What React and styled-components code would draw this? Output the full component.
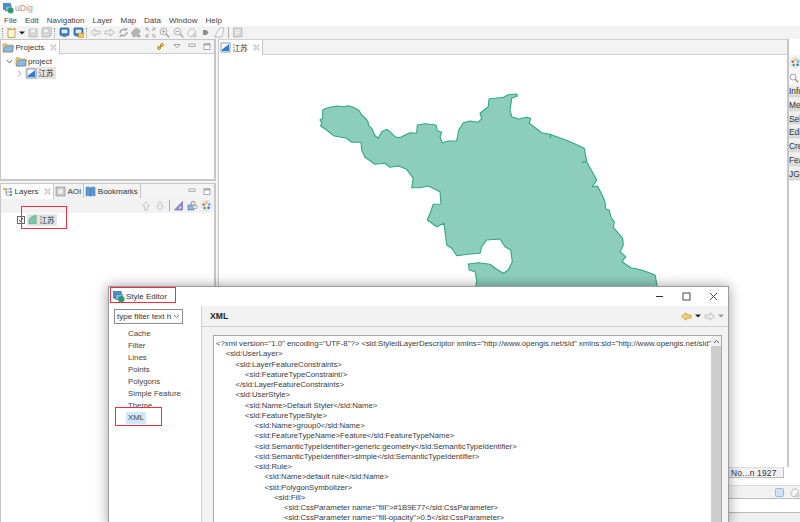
import styled, { createGlobalStyle } from "styled-components";

/* ---------- global ---------- */
const Global = createGlobalStyle`
  html, body { margin: 0; padding: 0; background: #fff; }
  #root { width: 800px; height: 522px; overflow: hidden; }
  * { box-sizing: border-box; }
`;

const CJK = `"Noto Sans CJK SC", "Liberation Sans", sans-serif`;
const UI = `"Liberation Sans", "Noto Sans CJK SC", sans-serif`;

/* ---------- window chrome ---------- */
const Shell = styled.div`
  position: relative;
  width: 800px;
  height: 522px;
  overflow: hidden;
  display: flex;
  flex-direction: column;
  font-family: ${UI};
  font-size: 8px;
  color: #333;
  background: #f4f4f4;
`;
const TitleBar = styled.div`
  height: 14px;
  background: #fff;
  display: flex;
  align-items: center;
  gap: 1px;
  padding: 2px 0 0 3px;
  font-size: 8.6px;
  color: #9a9a9a;
`;
const MenuBar = styled.div`
  height: 12px;
  background: #fff;
  display: flex;
  align-items: center;
  gap: 8px;
  padding: 1px 0 0 4px;
  color: #444;
`;
const ToolBar = styled.div`
  height: 13px;
  background: #f3f3f3;
  display: flex;
  align-items: center;
`;
const Grip = styled.span`
  width: 2px;
  height: 10px;
  margin: 0 ${(p) => (p.$tight ? 1 : 2)}px;
  flex: none;
  border-left: 1px dotted #999;
`;
const ToolSep = styled.span`
  width: 1px;
  height: 11px;
  margin: 0 2px;
  flex: none;
  background: #aaa;
`;
const ToolSlot = styled.span`
  width: ${(p) => p.$w || 13.7}px;
  height: 12px;
  flex: none;
  display: flex;
  align-items: center;
  justify-content: center;
`;

/* ---------- workbench ---------- */
const Workbench = styled.div`
  flex: 1;
  min-height: 0;
  display: flex;
`;
const LeftColumn = styled.div`
  width: 216px;
  flex: none;
  display: flex;
  flex-direction: column;
  gap: 2px;
`;
const View = styled.section`
  height: ${(p) => (p.$h ? `${p.$h}px` : "auto")};
  flex: ${(p) => (p.$h ? "none" : "1")};
  min-height: 0;
  display: flex;
  flex-direction: column;
  background: #fff;
  border: 1px solid #c6c6c6;
  border-width: 1px 2px ${(p) => (p.$h ? "2px" : "0")} 1px;
`;
const TabRow = styled.div`
  height: 14px;
  flex: none;
  display: flex;
  align-items: stretch;
  background: #f3f3f3;
  border-bottom: ${(p) => (p.$flat ? "none" : "1px solid #cfcfcf")};
`;
const Tab = styled.div`
  display: flex;
  align-items: center;
  gap: 1.5px;
  height: ${(p) => (p.$active ? 15 : 14)}px;
  padding: 0 2px 0 1px;
  color: #333;
  background: ${(p) => (p.$active ? "#fff" : "#f3f3f3")};
  border-right: 1px solid #c6c6c6;
  position: relative;
  z-index: 1;
`;
const TabClose = styled.span`
  margin-left: 4px;
  flex: none;
`;
const TabActions = styled.div`
  margin-left: auto;
  display: flex;
  align-items: center;
  gap: 7px;
  padding-right: 3px;
`;
const ViewBar = styled.div`
  height: 15px;
  flex: none;
  display: flex;
  justify-content: flex-end;
  align-items: center;
  padding-right: 1px;
  background: #f2f2f2;
`;
const Tree = styled.div`
  flex: 1;
  padding-top: ${(p) => p.$top || 1}px;
`;
const TreeRow = styled.div`
  height: 12px;
  display: flex;
  align-items: center;
  padding-left: ${(p) => p.$indent}px;
  gap: 1.5px;
`;
const Twist = styled.span`
  width: 8px;
  display: flex;
  justify-content: center;
  flex: none;
`;
const Selected = styled.span`
  display: inline-flex;
  align-items: center;
  gap: 2px;
  height: 12px;
  padding: 0 2px 0 1px;
  background: #e4e4e4;
`;
const Cjk = styled.span`
  font-family: ${CJK};
  font-size: 7.6px;
  line-height: 1;
`;
const Check = styled.span`
  width: 8px;
  height: 8px;
  border: 1px solid #666;
  background: #fff;
  flex: none;
  display: flex;
  align-items: center;
  justify-content: center;
`;

/* ---------- editor / map ---------- */
const MainColumn = styled.div`
  flex: 1;
  min-width: 0;
  display: flex;
  flex-direction: column;
  margin-left: 2px;
`;
const UpperArea = styled.div`
  height: 428px;
  flex: none;
  display: flex;
`;
const Editor = styled.section`
  flex: 1;
  min-width: 0;
  display: flex;
  flex-direction: column;
  background: #fff;
  border-left: 1px solid #c6c6c6;
  border-top: 1px solid #d0d0d0;
`;
const MapCanvas = styled.div`
  flex: 1;
  min-height: 0;
  overflow: hidden;
  background: #fff;
  border-top: 1px solid #cfcfcf;
  svg { display: block; }
`;
const Palette = styled.aside`
  width: 13px;
  flex: none;
  background: #fff;
  border-left: 2px solid #c6c6c6;
  display: flex;
  flex-direction: column;
  overflow: hidden;
  padding-top: 15px;
`;
const PaletteIcon = styled.div`
  height: 17px;
  display: flex;
  align-items: center;
  padding-left: 1px;
  background: #f6f6f6;
`;
const PaletteSearch = styled.div`
  height: 13px;
  display: flex;
  align-items: center;
  background: #fbfbfb;
`;
const PaletteItem = styled.div`
  height: 13.8px;
  padding: 2px 0 0 0;
  white-space: nowrap;
  overflow: hidden;
  color: #333;
  font-size: 8.4px;
  background: linear-gradient(#f4f4f4, #d6d6d6);
  border-bottom: 1px solid #e8e8e8;
`;
const StatusRow = styled.div`
  height: 18px;
  flex: none;
  background: #fff;
  display: flex;
  justify-content: flex-end;
  padding-right: 16px;
  align-items: flex-start;
`;
const StatusBox = styled.div`
  width: 55px;
  height: 11px;
  padding-left: 2px;
  line-height: 10px;
  font-size: 8.4px;
  letter-spacing: 0.2px;
  background: #f1f1f1;
  border-right: 1px solid #bbb;
  border-bottom: 1px solid #bbb;
  border-top: 1px solid #ddd;
`;
const BottomPanel = styled.div`
  flex: 1;
  display: flex;
  flex-direction: column;
  border-top: 1px solid #ddd;
  background: #f0f0f0;
`;
const BottomBar = styled.div`
  height: 13px;
  background: #f2f2f2;
  border-bottom: 1px solid #bbb;
  display: flex;
  justify-content: flex-end;
  align-items: center;
  gap: 4px;
`;
const BottomBody = styled.div`
  height: 14px;
  background: #fff;
  border-bottom: 1px solid #bbb;
`;

/* ---------- style editor dialog ---------- */
const Dialog = styled.div`
  position: absolute;
  left: 108px;
  top: 286px;
  width: 621px;
  height: 240px;
  background: #fff;
  border: 1px solid #9d9d9d;
  box-shadow: 0 0 12px rgba(0, 0, 0, 0.38);
  display: flex;
  flex-direction: column;
  z-index: 5;
`;
const DialogTitle = styled.div`
  height: 19px;
  flex: none;
  display: flex;
  align-items: center;
  gap: 1px;
  padding-left: 4px;
  color: #333;
`;
const WinButtons = styled.div`
  margin-left: auto;
  display: flex;
  align-items: center;
  gap: 18px;
  padding-right: 10px;
`;
const DialogBody = styled.div`
  flex: 1;
  min-height: 0;
  display: flex;
`;
const NavPane = styled.nav`
  width: 92px;
  flex: none;
  padding: 3px 0 0 5px;
  background: #fff;
`;
const FilterCombo = styled.div`
  width: 69px;
  height: 15px;
  display: flex;
  align-items: center;
  justify-content: space-between;
  padding: 0 2px;
  border: 1px solid #8c8c8c;
  color: #333;
  white-space: nowrap;
  overflow: hidden;
  margin-bottom: 4px;
`;
const NavItem = styled.div`
  height: 12px;
  line-height: 12px;
  margin-left: ${(p) => (p.$selected ? 12 : 14)}px;
  padding: 0 ${(p) => (p.$selected ? 2 : 0)}px;
  width: ${(p) => (p.$selected ? "20px" : "auto")};
  font-size: 7.8px;
  color: #444;
  white-space: nowrap;
  background: ${(p) => (p.$selected ? "#cde8ff" : "transparent")};
`;
const PagePane = styled.div`
  flex: 1;
  min-width: 0;
  display: flex;
  flex-direction: column;
  background: #f2f2f2;
  border-left: 1px solid #d0d0d0;
`;
const PageHeader = styled.div`
  height: 21px;
  flex: none;
  display: flex;
  align-items: center;
  justify-content: space-between;
  padding: 0 4px 0 8px;
  border-bottom: 1px solid #cfcfcf;
  font-weight: bold;
  font-size: 8.6px;
  color: #222;
`;
const HeaderNav = styled.div`
  display: flex;
  align-items: center;
  gap: 3px;
`;
const XmlFrame = styled.div`
  flex: 1;
  min-height: 0;
  margin: 8px 6px 0 11px;
  display: flex;
  background: #fff;
  border: 1px solid #a8a8a8;
  border-bottom: none;
`;
const XmlText = styled.div`
  flex: 1;
  min-width: 0;
  padding: 3px 0 0 2px;
  overflow: hidden;
`;
const XmlLine = styled.div`
  height: 10.25px;
  line-height: 10.25px;
  padding-left: ${(p) => p.$level * 9.7}px;
  white-space: nowrap;
  font-size: 7.75px;
  color: #3a3a3a;
`;
const Scrollbar = styled.div`
  width: 10px;
  flex: none;
  background: #f0f0f0;
  display: flex;
  flex-direction: column;
`;
const ScrollArrow = styled.div`
  height: 10px;
  display: flex;
  align-items: center;
  justify-content: center;
`;
const ScrollThumb = styled.div`
  flex: 1;
  background: #cdcdcd;
`;

/* red annotation boxes the screenshot's author drew over the window */
const Marker = styled.div`
  position: absolute;
  left: ${(p) => p.$x}px;
  top: ${(p) => p.$y}px;
  width: ${(p) => p.$w}px;
  height: ${(p) => p.$h}px;
  border: 1.5px solid #e8323f;
  z-index: 8;
  pointer-events: none;
`;

/* ---------- icons ---------- */
const S = ({ w = 11, h = 11, box = "0 0 11 11", children }) => (
  <svg width={w} height={h} viewBox={box} style={{ display: "block", flex: "none" }}>
    {children}
  </svg>
);

const UdigLogo = ({ size = 11 }) => (
  <S w={size} h={size}>
    <rect x="0.5" y="0.5" width="7" height="6" fill="#4c8fc9" stroke="#2d6a9f" strokeWidth="0.6" />
    <rect x="2.5" y="3" width="6" height="5" fill="#7db6e0" stroke="#2d6a9f" strokeWidth="0.5" />
    <circle cx="7.6" cy="7.6" r="3" fill="#36a05a" />
    <circle cx="7" cy="7" r="1.2" fill="#2f7fc0" />
  </S>
);
const NewDoc = () => (
  <S>
    <path d="M2 2.5h7v8H2z" fill="#fff6d8" stroke="#b99a3c" strokeWidth="0.8" />
    <path d="M1 1.5h3M5 .5v2M7 1.5h3" stroke="#d9a520" strokeWidth="0.8" />
  </S>
);
const Caret = ({ color = "#222" }) => (
  <S w={6} h={4} box="0 0 6 4">
    <path d="M0 .5h6L3 3.6z" fill={color} />
  </S>
);
const Save = ({ double }) => (
  <S>
    {double && <rect x="2.5" y="0.5" width="8" height="8" fill="#e4e4e4" stroke="#bdbdbd" strokeWidth="0.7" />}
    <rect x="1" y="2" width="8" height="8" fill="#d8d8d8" stroke="#b3b3b3" strokeWidth="0.7" />
    <rect x="3" y="2.5" width="4" height="2.5" fill="#f2f2f2" />
  </S>
);
const Monitor = ({ overlay }) => (
  <S>
    <rect x="1" y="1" width="9" height="7.5" rx="1" fill="#3f7fbf" stroke="#245a92" strokeWidth="0.7" />
    <rect x="2.6" y="2.6" width="5.8" height="3.6" fill="#dcecf9" />
    <rect x="3.5" y="8.7" width="4" height="1.3" fill="#6a8fb0" />
    {overlay && <path d="M5.5 6h5v4.5h-5z" fill="#f3c25b" stroke="#b8862a" strokeWidth="0.5" />}
  </S>
);
const GreyArrow = ({ dir = 1, stroke = "#b9b9b9", fill = "#efefef", w = 11 }) => (
  <S w={w} h={9} box="0 0 11 9">
    <g transform={dir < 0 ? "translate(11 0) scale(-1 1)" : undefined}>
      <path d="M1 3h5V.8L10.3 4.5 6 8.2V6H1z" fill={fill} stroke={stroke} strokeWidth="0.9" />
    </g>
  </S>
);
const UpArrow = ({ flip }) => (
  <S w={8} h={10} box="0 0 8 10">
    <g transform={flip ? "translate(0 10) scale(1 -1)" : undefined}>
      <path d="M4 .8 7.4 5H5.4v4H2.6V5H.6z" fill="#f3f3f3" stroke="#bdbdbd" strokeWidth="0.8" />
    </g>
  </S>
);
const Refresh = () => (
  <S>
    <path d="M2 6a3.5 3.5 0 0 1 6-2.5M9 5a3.5 3.5 0 0 1-6 2.5" fill="none" stroke="#a9a9a9" strokeWidth="1.6" />
    <path d="M7 1.5 9.5 1 9 4zM4 9.5 1.5 10 2 7z" fill="#a9a9a9" />
  </S>
);
const Puzzle = () => (
  <S>
    <path d="M2 3h2V1.5h3V3h2v2.5H7.5V8H9v2H6V8.5H4V10H2V7.5H.8V5H2z" fill="#b5b5b5" stroke="#979797" strokeWidth="0.5" />
  </S>
);
const ZoomExtent = () => (
  <S>
    <path d="M1 1l3 3M10 1 7 4M1 10l3-3M10 10 7 7" stroke="#b3b3b3" strokeWidth="1.2" />
    <path d="M1 3.4V1h2.4M7.6 1H10v2.4M1 7.6V10h2.4M10 7.6V10H7.6" fill="none" stroke="#b3b3b3" strokeWidth="0.9" />
  </S>
);
const Lens = ({ sign }) => (
  <S>
    <circle cx="4.5" cy="4.5" r="3.4" fill="#f2f2f2" stroke="#adadad" strokeWidth="0.9" />
    <path d="M7 7l3.2 3.2" stroke="#a0a0a0" strokeWidth="1.4" />
    <path d={sign === "+" ? "M2.8 4.5h3.4M4.5 2.8v3.4" : "M2.8 4.5h3.4"} stroke="#9a9a9a" strokeWidth="0.8" />
  </S>
);
const PickTool = () => (
  <S>
    <path d="M4 2h3.5l2 2v2L6 9.5H3.8L1.5 7z" fill="#f4f4f4" stroke="#b2b2b2" strokeWidth="0.8" />
    <path d="M7 7h3v3H7z" fill="#dcdcdc" stroke="#b2b2b2" strokeWidth="0.5" />
  </S>
);
const Dot = () => (
  <S>
    <path d="M3 3h3.4L8.5 5.5 6.4 8H3z" fill="#8c8c8c" />
  </S>
);
const Eraser = () => (
  <S w={12}>
    <path d="M1 10 6 1h4.5L8.5 10z" fill="#f6f6f6" stroke="#b1b1b1" strokeWidth="0.8" />
  </S>
);
const Preview = () => (
  <S>
    <rect x="1.5" y="1" width="8.5" height="9" fill="#d7d7d7" stroke="#b2b2b2" strokeWidth="0.7" />
    <path d="M3 3.5h5M3 5.5h5M3 7.5h3.4" stroke="#f5f5f5" strokeWidth="0.9" />
  </S>
);
const Folder = () => (
  <S w={12} h={11} box="0 0 12 11">
    <path d="M1 3V1.8h3.6L5.6 3H11v7H1z" fill="#f2cf7a" stroke="#a88a3a" strokeWidth="0.6" />
    <path d="M3 4h8.5L10 10H1.4z" fill="#8cb6e3" stroke="#50749e" strokeWidth="0.5" />
  </S>
);
const MapDoc = () => (
  <S>
    <rect x="1" y="1" width="9" height="9" fill="#fff" stroke="#71839a" strokeWidth="0.8" />
    <path d="M2 9V7.5L8.5 2.4H9V9z" fill="#2f7fd0" />
  </S>
);
const LayerShape = () => (
  <S w={10}>
    <path d="M1 10V7C1.5 3.5 4.5 1.3 9 1v9z" fill="#78c8a8" stroke="#4d9f80" strokeWidth="0.6" />
  </S>
);
const Chevron = ({ open }) => (
  <S w={7} h={7} box="0 0 7 7">
    <path d={open ? "M1 2l2.5 3L6 2" : "M2 .8 5 3.5 2 6.2"} fill="none" stroke={open ? "#555" : "#999"} strokeWidth="0.9" />
  </S>
);
const Pin = () => (
  <S>
    <path d="M2 7l2-2 2 2-2 2zM5 4l2-2 2 2-2 2z" fill="#f0c040" stroke="#a77c17" strokeWidth="0.7" />
    <path d="M4.5 6.5l2-2" stroke="#a77c17" strokeWidth="1" />
  </S>
);
const CloseGlyph = () => (
  <S w={7} h={7} box="0 0 7 7">
    <path d="M1 .6 3.500 2.600 6 .6 6.400 1 4.400 3.500 6.400 6 6 6.400 3.500 4.400 1 6.400 .6 6 2.600 3.500 .6 1z" fill="#fff" stroke="#9a9a9a" strokeWidth="0.6" />
  </S>
);
const MiniButton = ({ kind }) => (
  <S w={8} h={7} box="0 0 8 7">
    {kind === "menu" && <path d="M1 1.5h6L4 4.6z" fill="#fff" stroke="#777" strokeWidth="0.7" />}
    {kind === "min" && <rect x="1" y="1" width="6" height="2.4" fill="#fff" stroke="#888" strokeWidth="0.7" />}
    {kind === "max" && (
      <>
        <rect x="1" y="0.8" width="6" height="5.6" fill="#fff" stroke="#888" strokeWidth="0.7" />
        <path d="M1 1.8h6" stroke="#888" strokeWidth="1" />
      </>
    )}
  </S>
);
const LayersGlyph = () => (
  <S>
    <circle cx="2.5" cy="3" r="1.6" fill="#e6b64a" />
    <path d="M4 3h3M4 3v6h4M4 6h4" fill="none" stroke="#7a8a9a" strokeWidth="0.8" />
    <rect x="7.5" y="2" width="2" height="2" fill="#5e93c8" />
    <rect x="8" y="5" width="2" height="2" fill="#5e93c8" />
    <rect x="8" y="8" width="2" height="2" fill="#5e93c8" />
  </S>
);
const AoiGlyph = () => (
  <S>
    <rect x="1" y="1" width="9" height="9" fill="#c8c8c8" stroke="#8a8a8a" strokeWidth="0.6" />
    <rect x="3.2" y="3.2" width="4.6" height="4.6" fill="#f0f0f0" />
  </S>
);
const BookGlyph = () => (
  <S>
    <path d="M1 1.5c1.5-.6 3-.6 4.3.2v8.5C4 9.400 2.500 9.400 1 10zM10 1.500c-1.500-.6-3-.6-4.300.2v8.500c1.300-.8 2.800-.8 4.300-.2z" fill="#5d9ad8" stroke="#2f6aa6" strokeWidth="0.5" />
  </S>
);
const Wedge = () => (
  <S>
    <path d="M1.500 10 9.500 1.500V10z" fill="#8f8bc4" stroke="#6862a8" strokeWidth="0.6" />
    <path d="M5.500 8.500h2.600V6z" fill="#f1f1f8" />
  </S>
);
const StyleGlyph = () => (
  <S>
    <rect x="1" y="5" width="6" height="5" fill="#8db8e0" stroke="#41709e" strokeWidth="0.6" />
    <path d="M4 5V3.500a2 2 0 0 1 4 0V5" fill="none" stroke="#777" strokeWidth="0.8" />
    <rect x="6" y="5.500" width="4" height="3" fill="#e8e8e8" stroke="#888" strokeWidth="0.5" />
  </S>
);
const ColorWheel = () => (
  <S>
    <circle cx="5.500" cy="5.500" r="5" fill="#eceef6" stroke="#c4c8d8" strokeWidth="0.5" />
    <circle cx="5.500" cy="2.800" r="1.200" fill="#f2b32a" />
    <circle cx="8.200" cy="4.500" r="1.200" fill="#5da9e0" />
    <circle cx="7.500" cy="7.800" r="1.200" fill="#3f63c0" />
    <circle cx="3.700" cy="8" r="1.200" fill="#3aa655" />
    <circle cx="2.800" cy="4.600" r="1.200" fill="#de3b3b" />
  </S>
);
const SearchGlyph = () => (
  <S w={10} h={10} box="0 0 11 11">
    <circle cx="4.500" cy="4.500" r="3.300" fill="#fff" stroke="#8f8f8f" strokeWidth="0.9" />
    <path d="M7 7l3.300 3.300" stroke="#a07a5a" strokeWidth="1.400" />
  </S>
);
const BlueSquare = () => (
  <S>
    <rect x="1.500" y="1.500" width="8" height="8" rx="1" fill="#cfe3f6" stroke="#8db4dc" strokeWidth="0.9" />
  </S>
);

/* ---------- content ---------- */
const menus = ["File", "Edit", "Navigation", "Layer", "Map", "Data", "Window", "Help"];
const palette = ["Info", "Measure", "Selection", "Edit", "Create", "Feature", "JGrass"];
const pages = ["Cache", "Filter", "Lines", "Points", "Polygons", "Simple Feature", "Theme"];
const xml = [
  [0, `<?xml version="1.0" encoding="UTF-8"?> <sld:StyledLayerDescriptor xmlns="http://www.opengis.net/sld" xmlns:sld="http://www.opengis.net/sld" xmlns:ogc`],
  [1, "<sld:UserLayer>"],
  [2, "<sld:LayerFeatureConstraints>"],
  [3, "<sld:FeatureTypeConstraint/>"],
  [2, "</sld:LayerFeatureConstraints>"],
  [2, "<sld:UserStyle>"],
  [3, "<sld:Name>Default Styler</sld:Name>"],
  [3, "<sld:FeatureTypeStyle>"],
  [4, "<sld:Name>group0</sld:Name>"],
  [4, "<sld:FeatureTypeName>Feature</sld:FeatureTypeName>"],
  [4, "<sld:SemanticTypeIdentifier>generic:geometry</sld:SemanticTypeIdentifier>"],
  [4, "<sld:SemanticTypeIdentifier>simple</sld:SemanticTypeIdentifier>"],
  [4, "<sld:Rule>"],
  [5, "<sld:Name>default rule</sld:Name>"],
  [5, "<sld:PolygonSymbolizer>"],
  [6, "<sld:Fill>"],
  [7, `<sld:CssParameter name="fill">#1B9E77</sld:CssParameter>`],
  [7, `<sld:CssParameter name="fill-opacity">0.5</sld:CssParameter>`],
];

// outline of the province, in window coordinates
const outline = `322.7,110 326.7,108 336.7,106 345,106.7 348.3,105.7 353.3,107.3 359.3,110.7 361.7,115 367.7,120.7
368.7,125.7 371.7,128.3 375,135.7 378.3,138.3 381.7,131.7 386.7,129.3 390,131.7 395,136.7 400,137.7 405,135 410,132.7
416.7,133.3 417.3,125 425,123.7 436,125 437.3,130.7 441.7,132.3 440,136.7 442.3,142.7 448.3,141 456.7,140.7 458.7,130
463.3,122.7 470,121 478.3,122.3 481.7,118.3 480,113.3 488.3,106.7 489,99 503.3,97.3 508.3,94.7 516.7,94 517.3,96
511.7,98.3 510,110 511.7,116.7 518.3,119 526.7,117.3 530.7,118.3 529.3,123.3 541.7,132.7 550,134.3 568.3,141 584.3,148.3
586.7,161.7 596.7,180 592.3,186.7 597.3,186 601.7,194 605,201.7 605.7,209 609.3,210 610.7,216.7 614.3,221.7 613.3,227.3
622.7,238.3 623.3,245 620,251.7 625.7,256.7 622,261.700 631,267.7 641.7,270 655,275 656.7,283.3 658,300 474.3,300
476.7,280 475,271.7 469.3,270 468.3,264 478.3,262.7 490,264.3 496.7,269.3 503.3,273.3 508.3,270 512.3,261.7 510.7,250
505,246.7 500,239 486.7,240 481.7,246.7 480,253.3 470,254 456.7,255.7 451.7,248.3 446.7,245 444,223.3 436.7,226.7
427.3,220 430.7,211.7 433.3,204.3 441,204 440,191.7 428.3,186 420,187.7 411.7,187.7 413.3,178.3 406.7,169.3 398.3,166
390,167.3 385,163.3 375,164.3 365,157.3 361.7,150 361,142.3 351.7,142.3 346.7,138.3 333.3,135.7 326.7,130 320.7,126
321.7,122.3 320,120 322.7,118.3`;

export default function App() {
  return (
    <Shell>
      <Global />
      <TitleBar>
        <UdigLogo />
        uDig
      </TitleBar>
      <MenuBar>
        {menus.map((m) => (
          <span key={m}>{m}</span>
        ))}
      </MenuBar>
      <ToolBar>
        <Grip />
        <ToolSlot $w={11}><NewDoc /></ToolSlot>
        <ToolSlot $w={10}><Caret /></ToolSlot>
        <ToolSlot><Save /></ToolSlot>
        <ToolSlot $w={11}><Save double /></ToolSlot>
        <Grip />
        <ToolSlot><Monitor /></ToolSlot>
        <ToolSlot><Monitor overlay /></ToolSlot>
        <Grip $tight />
        <ToolSlot><GreyArrow dir={-1} /></ToolSlot>
        <ToolSlot><GreyArrow /></ToolSlot>
        <ToolSlot><Refresh /></ToolSlot>
        <ToolSlot><Puzzle /></ToolSlot>
        <ToolSlot><ZoomExtent /></ToolSlot>
        <ToolSlot><Lens sign="+" /></ToolSlot>
        <ToolSlot><Lens sign="-" /></ToolSlot>
        <ToolSlot><PickTool /></ToolSlot>
        <ToolSlot><Dot /></ToolSlot>
        <ToolSlot><Eraser /></ToolSlot>
        <ToolSep />
        <ToolSlot><Preview /></ToolSlot>
      </ToolBar>

      <Workbench>
        <LeftColumn>
          <View $h={142}>
            <TabRow>
              <Tab $active>
                <Folder />
                Projects
                <TabClose><CloseGlyph /></TabClose>
              </Tab>
              <TabActions>
                <Pin />
                <MiniButton kind="menu" />
                <MiniButton kind="min" />
                <MiniButton kind="max" />
              </TabActions>
            </TabRow>
            <Tree>
              <TreeRow $indent={4}>
                <Twist><Chevron open /></Twist>
                <Folder />
                project
              </TreeRow>
              <TreeRow $indent={14}>
                <Twist><Chevron /></Twist>
                <Selected>
                  <MapDoc />
                  <Cjk>江苏</Cjk>
                </Selected>
              </TreeRow>
            </Tree>
          </View>
          <View>
            <TabRow $flat>
              <Tab $active>
                <LayersGlyph />
                Layers
                <TabClose><CloseGlyph /></TabClose>
              </Tab>
              <Tab>
                <AoiGlyph />
                AOI
              </Tab>
              <Tab>
                <BookGlyph />
                Bookmarks
              </Tab>
              <TabActions>
                <MiniButton kind="min" />
                <MiniButton kind="max" />
              </TabActions>
            </TabRow>
            <ViewBar>
              <ToolSlot><UpArrow /></ToolSlot>
              <ToolSlot><UpArrow flip /></ToolSlot>
              <ToolSep />
              <ToolSlot><Wedge /></ToolSlot>
              <ToolSlot><StyleGlyph /></ToolSlot>
              <ToolSlot><ColorWheel /></ToolSlot>
            </ViewBar>
            <Tree $top={0.5}>
              <TreeRow $indent={16}>
                <Check>
                  <S w={6} h={6} box="0 0 6 6">
                    <path d="M1 3l1.500 1.500L5 1" fill="none" stroke="#333" strokeWidth="0.9" />
                  </S>
                </Check>
                <Selected>
                  <LayerShape />
                  <Cjk>江苏</Cjk>
                </Selected>
              </TreeRow>
            </Tree>
          </View>
        </LeftColumn>

        <MainColumn>
          <UpperArea>
            <Editor>
              <TabRow $flat>
                <Tab $active>
                  <MapDoc />
                  <Cjk>江苏</Cjk>
                  <TabClose><CloseGlyph /></TabClose>
                </Tab>
              </TabRow>
              <MapCanvas>
                <svg width="567" height="412" viewBox="219 55 567 412">
                  <polygon points={outline} fill="#8dcebb" stroke="#2fa782" strokeWidth="1.1" strokeLinejoin="round" />
                  <path d="M550.500 134v4M582 162.500l4.700-1" stroke="#1f9e77" strokeWidth="1" />
                </svg>
              </MapCanvas>
            </Editor>
            <Palette>
              <PaletteIcon><ColorWheel /></PaletteIcon>
              <PaletteSearch><SearchGlyph /></PaletteSearch>
              {palette.map((p) => (
                <PaletteItem key={p}>{p}</PaletteItem>
              ))}
            </Palette>
          </UpperArea>
          <StatusRow>
            <StatusBox>No...n 1927</StatusBox>
          </StatusRow>
          <BottomPanel>
            <BottomBar>
              <BlueSquare />
              <PickTool />
            </BottomBar>
            <BottomBody />
          </BottomPanel>
        </MainColumn>
      </Workbench>

      <Dialog>
        <DialogTitle>
          <UdigLogo size={12} />
          Style Editor
          <WinButtons>
            <S w={9} h={9} box="0 0 9 9"><path d="M1 4.500h7" stroke="#333" strokeWidth="1" /></S>
            <S w={9} h={9} box="0 0 9 9"><rect x="1" y="1" width="7" height="7" fill="none" stroke="#333" strokeWidth="0.9" /></S>
            <S w={9} h={9} box="0 0 9 9"><path d="M1 1l7 7M8 1 1 8" stroke="#333" strokeWidth="0.9" /></S>
          </WinButtons>
        </DialogTitle>
        <DialogBody>
          <NavPane>
            <FilterCombo>
              type filter text h
              <S w={7} h={5} box="0 0 7 5"><path d="M1 1l2.500 2.500L6 1" fill="none" stroke="#555" strokeWidth="0.8" /></S>
            </FilterCombo>
            {pages.map((p) => (
              <NavItem key={p}>{p}</NavItem>
            ))}
            <NavItem $selected>XML</NavItem>
          </NavPane>
          <PagePane>
            <PageHeader>
              XML
              <HeaderNav>
                <GreyArrow dir={-1} stroke="#cf9a2c" fill="#f8dc8c" />
                <Caret />
                <GreyArrow />
                <Caret color="#999" />
              </HeaderNav>
            </PageHeader>
            <XmlFrame>
              <XmlText>
                {xml.map(([level, text], i) => (
                  <XmlLine key={i} $level={level}>{text}</XmlLine>
                ))}
              </XmlText>
              <Scrollbar>
                <ScrollArrow>
                  <S w={7} h={5} box="0 0 7 5"><path d="M1 4l2.500-2.500L6 4" fill="none" stroke="#444" strokeWidth="0.9" /></S>
                </ScrollArrow>
                <ScrollThumb />
              </Scrollbar>
            </XmlFrame>
          </PagePane>
        </DialogBody>
      </Dialog>

      <Marker $x={21} $y={206} $w={46} $h={23} />
      <Marker $x={110} $y={287} $w={66} $h={16} />
      <Marker $x={115} $y={407} $w={47} $h={19} />
    </Shell>
  );
}
